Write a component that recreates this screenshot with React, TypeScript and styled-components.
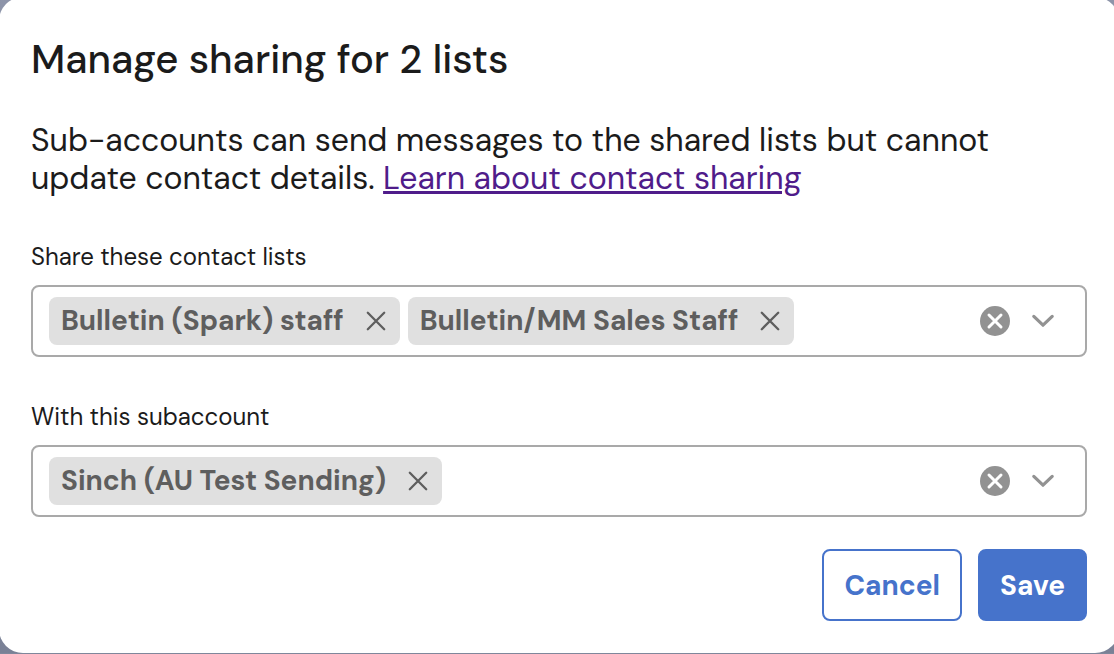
import React, { useId, useState } from "react";
import styled, { createGlobalStyle } from "styled-components";

const GlobalStyle = createGlobalStyle`
  *, *::before, *::after { box-sizing: border-box; }
  html { background: #7f879b; }
  body {
    margin: 0;
    overflow: hidden;
    color: #1b1b1b;
    font-family: "DM Sans", Inter, "Liberation Sans", sans-serif;
  }
  button, input { font: inherit; }
`;

const Backdrop = styled.div`
  min-height: 100vh;
  background: linear-gradient(#8d94a9, #7a8196);
`;

const Dialog = styled.form`
  display: flex;
  flex-direction: column;
  margin: -3px -5px 0 -1px;
  padding: 36px 32px 32px;
  border-radius: 24px;
  background: #fff;
`;

const Title = styled.h1`
  margin: 0;
  font-size: 40px;
  line-height: 52px;
  font-weight: 500;
`;

const Intro = styled.p`
  margin: 36px 0 0;
  max-width: 1000px;
  font-size: 32px;
  line-height: 38px;
`;

const HelpLink = styled.a`
  color: #4f1c8a;
  text-decoration: underline;
  text-decoration-thickness: 3px;
  text-underline-offset: 2px;
`;

const Field = styled.div`
  display: flex;
  flex-direction: column;
  gap: 12px;
  margin-top: 44px;
`;

const Label = styled.label`
  font-size: 24px;
  line-height: 32px;
`;

const Control = styled.div`
  display: flex;
  align-items: center;
  gap: 8px;
  min-height: 72px;
  padding: 10px 27px 10px 16px;
  border: 2px solid #a9a9a9;
  border-radius: 8px;
  background: #fff;
`;

const Tag = styled.span`
  display: flex;
  flex: none;
  align-items: center;
  gap: 20px;
  height: 48px;
  padding: 0 12px;
  border-radius: 8px;
  background: #e0e0e0;
  color: #5e5e5e;
  font-size: 28px;
  line-height: 32px;
  font-weight: 700;
  white-space: nowrap;
`;

const IconButton = styled.button<{ $size: number }>`
  display: flex;
  flex: none;
  align-items: center;
  justify-content: center;
  width: ${(p) => p.$size}px;
  height: ${(p) => p.$size}px;
  padding: 0;
  border: 0;
  background: none;
  color: inherit;
  cursor: pointer;
`;

const SearchInput = styled.input`
  flex: 1;
  min-width: 0;
  height: 40px;
  padding: 0;
  border: 0;
  outline: 0;
  background: transparent;
  font-size: 28px;
`;

const Indicators = styled.div`
  display: flex;
  align-items: center;
  gap: 18px;
  color: #929292;
`;

const Actions = styled.div`
  display: flex;
  justify-content: flex-end;
  gap: 16px;
  margin-top: 32px;
`;

const ActionButton = styled.button<{ $primary?: boolean }>`
  height: 72px;
  padding: 2px 20px 0;
  border: 2px solid #4673cb;
  border-radius: 8px;
  background: ${(p) => (p.$primary ? "#4673cb" : "#fff")};
  color: ${(p) => (p.$primary ? "#fff" : "#4673cb")};
  font-size: 28px;
  line-height: 32px;
  font-weight: 700;
  cursor: pointer;
`;

const CrossIcon = () => (
  <svg width="24" height="24" viewBox="0 0 24 24" fill="none" stroke="currentColor" strokeWidth="2.3" strokeLinecap="round" aria-hidden="true">
    <path d="M3.8 3.8 20.2 20.2M20.2 3.8 3.8 20.2" />
  </svg>
);

const ClearIcon = () => (
  <svg width="30" height="30" viewBox="0 0 30 30" aria-hidden="true">
    <circle cx="15" cy="15" r="15" fill="currentColor" />
    <path d="M9 9 21 21M21 9 9 21" stroke="#fff" strokeWidth="3" strokeLinecap="round" />
  </svg>
);

const ChevronIcon = () => (
  <svg width="30" height="30" viewBox="0 0 30 30" fill="none" stroke="currentColor" strokeWidth="3.2" strokeLinecap="round" strokeLinejoin="round" aria-hidden="true">
    <path d="M5.8 10.4 15 19.2 24.2 10.4" />
  </svg>
);

function TagSelect({ label, initial }: { label: string; initial: string[] }) {
  const id = useId();
  const [tags, setTags] = useState(initial);
  return (
    <Field>
      <Label htmlFor={id}>{label}</Label>
      <Control>
        {tags.map((tag) => (
          <Tag key={tag}>
            {tag}
            <IconButton
              type="button"
              $size={24}
              aria-label={`Remove ${tag}`}
              onClick={() => setTags(tags.filter((t) => t !== tag))}
            >
              <CrossIcon />
            </IconButton>
          </Tag>
        ))}
        <SearchInput id={id} type="text" autoComplete="off" />
        <Indicators>
          <IconButton type="button" $size={30} aria-label="Clear all" onClick={() => setTags([])}>
            <ClearIcon />
          </IconButton>
          <IconButton type="button" $size={30} aria-label="Show options">
            <ChevronIcon />
          </IconButton>
        </Indicators>
      </Control>
    </Field>
  );
}

export default function App() {
  return (
    <>
      <GlobalStyle />
      <Backdrop>
        <Dialog role="dialog" aria-labelledby="sharing-title" onSubmit={(e) => e.preventDefault()}>
          <Title id="sharing-title">Manage sharing for 2 lists</Title>
          <Intro>
            Sub-accounts can send messages to the shared lists but cannot update contact details.{" "}
            <HelpLink href="#contact-sharing">Learn about contact sharing</HelpLink>
          </Intro>
          <TagSelect
            label="Share these contact lists"
            initial={["Bulletin (Spark) staff", "Bulletin/MM Sales Staff"]}
          />
          <TagSelect label="With this subaccount" initial={["Sinch (AU Test Sending)"]} />
          <Actions>
            <ActionButton type="button">Cancel</ActionButton>
            <ActionButton type="submit" $primary>
              Save
            </ActionButton>
          </Actions>
        </Dialog>
      </Backdrop>
    </>
  );
}
